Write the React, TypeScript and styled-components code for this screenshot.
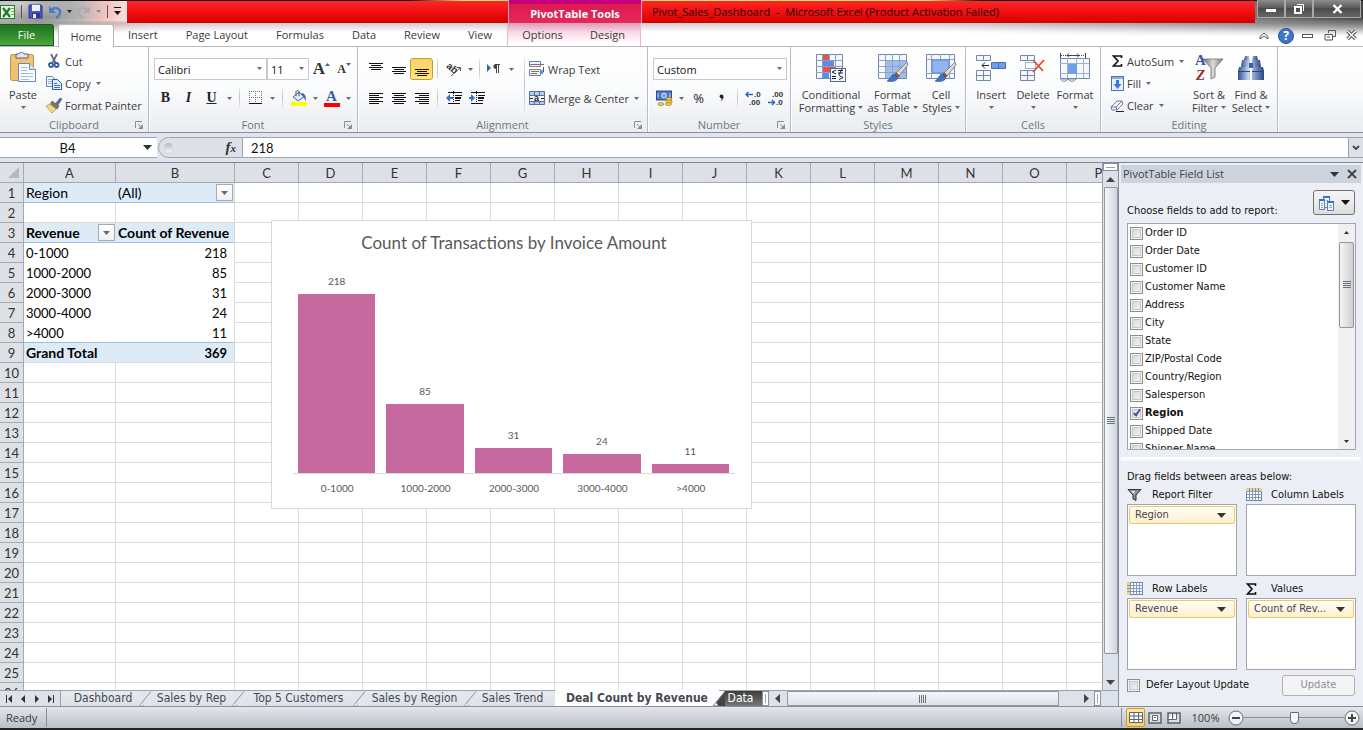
import React from "react";
import styled, { createGlobalStyle, css } from "styled-components";

const ui = `"Open Sans", "Liberation Sans", sans-serif`;
const dialog = `"DejaVu Sans Condensed", "DejaVu Sans", sans-serif`;
const sheet = `Lato, "Liberation Sans", sans-serif`;

const Global = createGlobalStyle`
  *, *::before, *::after { box-sizing: border-box; }
  html, body { margin: 0; height: 100%; }
  #root { height: 100%; }
  body { font: 11px/13px ${ui}; color: #3b3b3b; background: #fff; overflow: hidden; }
  button, input, select { font: inherit; color: inherit; margin: 0; }
  button { background: none; border: 0; padding: 0; cursor: default; }
`;

/* ---------- shared pieces ---------- */

const Svg = styled.svg`
  display: block;
  flex: none;
  overflow: visible;
`;

type IconProps = { w: number; h: number; children: React.ReactNode };
const Icon = ({ w, h, children }: IconProps) => (
  <Svg width={w} height={h} viewBox={`0 0 ${w} ${h}`} fill="none" aria-hidden="true">
    {children}
  </Svg>
);

type ArrowProps = { color?: string; big?: boolean; dir?: "up" | "down" | "left" | "right" };
const Arrow = ({ color = "#6a6a6a", big, dir = "down" }: ArrowProps) => {
  const size = big ? 9 : 5;
  const shapes = big
    ? { down: "M0 2h9L4.5 7z", up: "M0 7h9L4.5 2z", left: "M7 0v9L2 4.5z", right: "M2 0v9L7 4.5z" }
    : { down: "M0 1h5L2.5 4z", up: "M0 4h5L2.5 1z", left: "M4 0v5L1 2.5z", right: "M1 0v5L4 2.5z" };
  return (
    <Icon w={size} h={size}>
      <path d={shapes[dir]} fill={color} />
    </Icon>
  );
};

const Window = styled.div`
  display: flex;
  flex-direction: column;
  height: 100vh;
  overflow: hidden;
`;

/* ---------- title bar ---------- */

const Header = styled.header`
  flex: none;
  background:
    linear-gradient(to right, #111 0, #111 30%, #f3e36a 34%, #f3e36a 68%, #111 72%) top / 100% 1px no-repeat,
    linear-gradient(to bottom, transparent 20px, rgba(110, 110, 110, 0.35) 23px, rgba(255, 255, 255, 0.1) 32px, transparent 40px) no-repeat,
    radial-gradient(ellipse 60px 16px at 20px 4px, rgba(255, 255, 255, 0.5), transparent),
    linear-gradient(to bottom, transparent 18px, #fff 36px) no-repeat,
    linear-gradient(to right, #a9a9a9 0, #8a8a8a 40px, #b0b0b0 75px, #f3c2bf 105px, #fff 150px, #fff calc(100% - 420px), #d8d8d8 calc(100% - 330px), #777 calc(100% - 110px), #444 100%);
`;

const TitleRow = styled.div`
  display: flex;
  height: 23px;
`;

const QuickAccess = styled.div`
  display: flex;
  align-items: center;
  gap: 5px;
  width: 127px;
  flex: none;
`;

const QuickSep = styled.span`
  width: 1px;
  height: 13px;
  margin: 0 1px;
  background: #555;
`;

const redFill = css`
  background: linear-gradient(#ff2626, #f31414 40%, #d60000);
`;

const RedBlock = styled.div`
  ${redFill}
  width: 381px;
  margin-top: 1px;
  flex: none;
`;

const ToolsTitle = styled.div`
  width: 134px;
  flex: none;
  padding-top: 4px;
  text-align: center;
  font-weight: 700;
  line-height: 19px;
  color: #fff;
  background: linear-gradient(#c4007c 0, #c4007c 4px, #dd1a50 4px, #e5285a 100%);
  border: solid #f29ac0;
  border-width: 0 1px;
`;

const DocTitle = styled.h1`
  ${redFill}
  flex: 1;
  margin: 1px 0 0;
  padding-left: 10px;
  font: 400 11px/22px ${ui};
  color: #2a0000;
  white-space: pre;
`;

const WindowButtons = styled.div`
  display: flex;
  width: 108px;
  height: 19px;
  flex: none;
  padding: 0 2px 1px;
`;

const WindowButton = styled.button<{ $grow?: boolean }>`
  flex: ${(p) => (p.$grow ? "1" : "0 0 28px")};
  display: flex;
  align-items: center;
  justify-content: center;
  background: linear-gradient(#8d8d8d, #575757 50%, #4b4b4b 50%, #666);
  border: 1px solid #a8a8a8;
  border-top: 0;
`;

/* ---------- tabs ---------- */

const TabRow = styled.nav`
  display: flex;
  height: 24px;
  padding-top: 1px;
  box-shadow: inset 0 -1px #b6babf;
`;

const tabBase = css`
  height: 22px;
  font-size: 11px;
  line-height: 22px;
  text-align: center;
`;

const FileTab = styled.button`
  ${tabBase}
  width: 54px;
  line-height: 20px;
  color: #fff;
  background: linear-gradient(#217321, #2f8a2c 50%, #4ea63c);
  border: 1px solid #1c5d1e;
  border-left: 0;
  border-radius: 0 3px 0 0;
`;

const HomeTab = styled.button`
  ${tabBase}
  width: 56px;
  height: 23px;
  margin-left: 4px;
  line-height: 21px;
  background: #fff;
  border: 1px solid #b6babf;
  border-bottom: 0;
  border-radius: 3px 3px 0 0;
`;

const Tab = styled.button`
  ${tabBase}
  padding: 0 14px;
`;

const ToolTabs = styled.div`
  display: flex;
  width: 134px;
  margin: -1px auto 1px 1px;
  padding: 1px 0 0 2px;
  background: linear-gradient(rgba(238, 100, 160, 0.45), rgba(255, 255, 255, 0) 90%);
  border: solid #efb4d2;
  border-width: 0 1px;
`;

const ToolTab = styled.button`
  ${tabBase}
  flex: 1;
`;

const TabTools = styled.div`
  display: flex;
  align-items: center;
  width: 110px;
`;

const TabTool = styled.button`
  flex: 1;
  display: flex;
  justify-content: center;
`;

/* ---------- ribbon ---------- */

const Ribbon = styled.div`
  display: flex;
  flex: none;
  height: 86px;
  background: linear-gradient(#fff, #fafbfc 50%, #e9ecf0);
  border-bottom: 1px solid #8b9097;
`;

const Group = styled.section<{ $w: number }>`
  display: flex;
  flex-direction: column;
  width: ${(p) => p.$w}px;
  flex: none;
  border-right: 1px solid #b9bdc3;
  box-shadow: 1px 0 #fff;
`;

const GroupBody = styled.div<{ $pad?: string }>`
  display: flex;
  height: 70px;
  padding: ${(p) => p.$pad ?? "0"};
`;

const GroupLabel = styled.div`
  display: flex;
  align-items: center;
  height: 15px;
  color: #6f7680;

  span { flex: 1; text-align: center; }
`;

const Launcher = styled.button`
  width: 12px;
  height: 12px;
  margin: 0 3px 0 -15px;
`;

type RibbonGroupProps = { w: number; label: string; pad?: string; launcher?: boolean; children: React.ReactNode };
const RibbonGroup = ({ w, label, pad, launcher, children }: RibbonGroupProps) => (
  <Group $w={w} aria-label={label}>
    <GroupBody $pad={pad}>{children}</GroupBody>
    <GroupLabel>
      <span>{label}</span>
      {launcher && (
        <Launcher aria-label={`${label} options`}>
          <Icon w={12} h={12}>
            <path d="M2.5 9V2.5H9" stroke="#8a8f96" />
            <path d="M5 5l3 3" stroke="#8a8f96" />
            <path d="M10 5v5H5z" fill="#8a8f96" />
          </Icon>
        </Launcher>
      )}
    </GroupLabel>
  </Group>
);

const BigButton = styled.button<{ $w: number }>`
  display: flex;
  flex-direction: column;
  align-items: center;
  width: ${(p) => p.$w}px;
  flex: none;
  white-space: nowrap;
`;

const BigIcon = styled.span`
  display: flex;
  align-items: center;
  justify-content: center;
  height: 36px;
  margin: 3px 0 2px;
`;

const BigLine = styled.span`
  display: flex;
  align-items: center;
  gap: 3px;
  height: 13px;
`;

type LargeProps = { w: number; icon: React.ReactNode; top: string; bottom?: string };
const Large = ({ w, icon, top, bottom }: LargeProps) => (
  <BigButton $w={w}>
    <BigIcon>{icon}</BigIcon>
    <BigLine>{top}</BigLine>
    <BigLine>
      {bottom}
      <Arrow />
    </BigLine>
  </BigButton>
);

const Stack = styled.div<{ $gap?: number; $top?: number; $w?: number }>`
  display: flex;
  flex-direction: column;
  gap: ${(p) => p.$gap ?? 0}px;
  padding-top: ${(p) => p.$top ?? 0}px;
  width: ${(p) => (p.$w ? `${p.$w}px` : "auto")};
`;

const SmallButton = styled.button`
  display: flex;
  align-items: center;
  gap: 3px;
  height: 22px;
  white-space: nowrap;

  svg:last-child:not(:first-child) { margin-left: 2px; }
`;

const ToolLine = styled.div`
  display: flex;
  align-items: center;
  height: 22px;
`;

const Tool = styled.button<{ $w?: number; $on?: boolean }>`
  display: flex;
  align-items: center;
  justify-content: center;
  width: ${(p) => p.$w ?? 23}px;
  height: 22px;
  flex: none;
  border-radius: 3px;
  ${(p) =>
    p.$on &&
    css`
      background: linear-gradient(#fbd36b, #fddb6c 50%, #ffe88d);
      border: 1px solid #c29b3c;
    `}
`;

const Glyph = styled.span<{ $italic?: boolean; $line?: boolean }>`
  font: ${(p) => (p.$italic ? "italic" : "normal")} 700 14px/16px "Liberation Serif", serif;
  color: #222;
  text-decoration: ${(p) => (p.$line ? "underline" : "none")};
`;

const PercentGlyph = styled.span`
  font: 400 13px/16px ${ui};
  color: #222;
`;

const Divider = styled.span<{ $tall?: boolean }>`
  width: 1px;
  height: ${(p) => (p.$tall ? 54 : 20)}px;
  flex: none;
  margin: 0 4px;
  background: linear-gradient(#e6e8eb, #bfc3c8, #e6e8eb);
`;

const EditIcon = styled.span`
  display: flex;
  justify-content: center;
  width: 14px;
`;

const Picker = styled.label<{ $w: number }>`
  position: relative;
  display: block;
  width: ${(p) => p.$w}px;
  height: 22px;
  flex: none;

  svg { position: absolute; right: 5px; top: 8px; pointer-events: none; }
`;

const Select = styled.select`
  appearance: none;
  width: 100%;
  height: 22px;
  padding: 0 3px;
  color: #111;
  background: #fff;
  border: 1px solid #c6c9cd;
  border-radius: 0;
`;

type SelectBoxProps = { w: number; label: string; options: string[] };
const SelectBox = ({ w, label, options }: SelectBoxProps) => (
  <Picker $w={w}>
    <Select aria-label={label} defaultValue={options[0]}>
      {options.map((o) => (
        <option key={o}>{o}</option>
      ))}
    </Select>
    <Arrow />
  </Picker>
);

/* ---------- ribbon icons ---------- */

type Rows = [number, number, number][];
const lines = (rows: Rows) => rows.map(([x, y, w]) => `M${x} ${y + 0.5}h${w}`).join("");
const AlignIcon = ({ rows }: { rows: Rows }) => (
  <Icon w={14} h={13}>
    <path d={lines(rows)} stroke="#111" />
  </Icon>
);
const topRows: Rows = [[0, 0, 14], [2, 2, 10], [0, 4, 14], [2, 6, 10]];
const midRows: Rows = [[0, 4, 14], [2, 6, 10], [0, 8, 14], [2, 10, 10]];
const lowRows: Rows = [[0, 6, 14], [2, 8, 10], [0, 10, 14], [2, 12, 10]];
const leftRows: Rows = [[0, 1, 14], [0, 3, 10], [0, 5, 14], [0, 7, 10], [0, 9, 14], [0, 11, 10]];
const centerRows: Rows = [[0, 1, 14], [2, 3, 10], [0, 5, 14], [2, 7, 10], [0, 9, 14], [2, 11, 10]];
const rightRows: Rows = [[0, 1, 14], [4, 3, 10], [0, 5, 14], [4, 7, 10], [0, 9, 14], [4, 11, 10]];

const PasteIcon = () => (
  <Icon w={28} h={32}>
    <rect x="1.5" y="2.500" width="23" height="26" rx="2" fill="#efc173" stroke="#c58f3e" />
    <path d="M7 2h3c0-2 5-2 5 0h4v4H7z" fill="#e4e7eb" stroke="#5c636d" />
    <path d="M9.5 11.5h11l6 6v12h-17z" fill="#f7faff" stroke="#6f87b1" />
    <path d="M20.5 11.5v6h6" fill="#dbe6f7" stroke="#6f87b1" />
    <path d="M12 15.5h6M12 18.5h6M12 21.5h12M12 24.5h12M12 27.5h8" stroke="#a8bbdb" />
  </Icon>
);
const CutIcon = () => (
  <Icon w={16} h={16}>
    <path d="M5 1l4.500 9M11 1L6.500 10" stroke="#5b6a80" strokeWidth="1.700" />
    <circle cx="5" cy="12" r="2" stroke="#2f57a8" strokeWidth="1.800" />
    <circle cx="10.500" cy="12" r="2" stroke="#2f57a8" strokeWidth="1.800" />
  </Icon>
);
const CopyIcon = () => (
  <Icon w={16} h={16}>
    <path d="M.5 1.5h6l3 3v7h-9z" fill="#f3f7ff" stroke="#6484bd" />
    <path d="M2 4.5h4M2 6.5h5M2 8.5h5" stroke="#8ba8db" />
    <path d="M6.5 4.5h5l4 4v6h-9z" fill="#e3edff" stroke="#2e5ba8" />
    <path d="M8 8.5h3M8 10.5h6M8 12.5h6" stroke="#4674c4" />
  </Icon>
);
const BrushIcon = () => (
  <Icon w={16} h={16}>
    <path d="M10 6l4-5 2 1-4 6z" fill="#6e6e9d" stroke="#44446c" strokeWidth=".6" />
    <path d="M6 4l7 5-2 3-7-4z" fill="#777" stroke="#484848" strokeWidth=".6" />
    <path d="M4 7l6 5-4 4L0 9z" fill="#f5dc83" stroke="#b7973b" strokeWidth=".8" />
  </Icon>
);
const BorderIcon = () => (
  <Icon w={14} h={14}>
    <path d="M0 .5h13M0 6.5h13M.5 0v12M6.5 0v12M12.5 0v12" stroke="#777" strokeDasharray="1 1" />
    <path d="M0 12.5h13" stroke="#111" />
  </Icon>
);
const FillIcon = () => (
  <Icon w={16} h={17}>
    <path d="M2 7l6-5 5 5-6 4z" fill="#dce7f7" stroke="#4a6da7" />
    <path d="M5 6V1.5c0-1 3-1 3 0V6" stroke="#555" />
    <path d="M10 3c4 0 5 3 5 8l-2-3z" fill="#3c68b5" />
    <path d="M0 12h16v4H0z" fill="#ff0" />
  </Icon>
);
const LetterBar = styled.span`
  font: 700 15px/13px "Liberation Serif", serif;
  width: 16px;
  height: 17px;
  text-align: center;
  color: #3b5d9c;
  border-bottom: 4px solid #f00;
`;
const SizeLetter = styled.span<{ $small?: boolean }>`
  font: 700 ${(p) => (p.$small ? 12 : 17)}px/18px "Liberation Serif", serif;
  color: #333;
`;
const ScriptTri = ({ up }: { up?: boolean }) => (
  <Icon w={5} h={12}>
    <path d={up ? "M0 3h5L2.5 0z" : "M0 0h5L2.5 3z"} fill="#3a62ad" />
  </Icon>
);
const OrientIcon = () => (
  <Icon w={16} h={16}>
    <text x="0" y="9" fontSize="10" fontWeight="700" fontFamily="Liberation Sans" fill="#333" transform="rotate(40 4 7)">
      ab
    </text>
    <path d="M5 15l9-8M10.5 6.5h4V10" stroke="#555" />
  </Icon>
);
const ParaIcon = () => (
  <Icon w={14} h={12}>
    <path d="M0 1v8l4-4z" fill="#2f62c0" />
    <path d="M11.5 10V1.5M9.5 10V1.5M13 1.5H8" stroke="#444" />
    <path d="M9 1C5.500 1 5.500 6 9 6z" fill="#444" />
  </Icon>
);
const IndentIcon = ({ out }: { out?: boolean }) => (
  <Icon w={16} h={14}>
    <path d="M2 1.5h14M2 12.5h12" stroke="#111" />
    <path d="M9 4.5h7M9 9.5h5" stroke="#111" />
    <path d="M9 7h6" stroke="#111" strokeWidth="2" />
    <path d="M7.5 0v14" stroke="#111" strokeDasharray="1 1" />
    <path d={out ? "M4 3L0 7l4 4V8h3V6H4z" : "M2 3l4 4-4 4V8H0V6h2z"} fill="#3a6fd0" />
  </Icon>
);
const WrapIcon = () => (
  <Icon w={16} h={16}>
    <path d="M.5.5h11v5H.5zM.5 8.5h11v6H.5z" fill="#eef3fb" stroke="#6a82ab" />
    <path d="M0 3.5h15M2 10.5h8M2 12.5h6" stroke="#a5673f" />
    <path d="M14.5 6v5H12M14 8.5L11.500 11l2.500 2" stroke="#2c5bb0" />
  </Icon>
);
const MergeIcon = () => (
  <Icon w={16} h={15}>
    <path d="M.5.5h15v13H.5z" fill="#b8cbe8" stroke="#5571a3" />
    <path d="M0 4.5h16M0 10.5h16M5.5 0v4M10.5 0v4M5.5 11v3M10.5 11v3" stroke="#5571a3" />
    <path d="M1 5h14v5H1z" fill="#f5f8fd" />
    <text x="5" y="10" fontSize="9" fontWeight="700" fontFamily="Liberation Sans" fill="#222">
      a
    </text>
    <path d="M1 7.5h3M12 7.5h3" stroke="#222" />
  </Icon>
);
const MoneyIcon = () => (
  <Icon w={17} h={17}>
    <rect x=".5" y="1" width="15" height="9" fill="#4a74bd" stroke="#274c90" />
    <circle cx="8" cy="5.500" r="2.500" fill="#7fa2dd" stroke="#d4e1f8" />
    <path d="M2 3.5v4M14 3.5v4" stroke="#cfddf7" />
    <ellipse cx="13" cy="9" rx="3" ry="1.500" fill="#f6cc55" stroke="#a97918" strokeWidth=".7" />
    <ellipse cx="13" cy="11.500" rx="3" ry="1.500" fill="#f6cc55" stroke="#a97918" strokeWidth=".7" />
    <ellipse cx="12.500" cy="14" rx="3" ry="1.500" fill="#f6cc55" stroke="#a97918" strokeWidth=".7" />
    <ellipse cx="5" cy="14" rx="3" ry="1.500" fill="#f6cc55" stroke="#a97918" strokeWidth=".7" />
  </Icon>
);
const CommaIcon = () => (
  <Icon w={5} h={8}>
    <path d="M.5 2.500a2 2 0 114 0c0 2-1 3.500-3 4.500 1-1 1.200-2 1-2.700a2 2 0 01-2-1.800z" fill="#222" />
  </Icon>
);
const DecimalIcon = ({ more }: { more?: boolean }) => (
  <Icon w={17} h={16}>
    <g fontSize="8" fontWeight="700" fontFamily="Liberation Sans" fill="#333">
      <text x={more ? 9 : 4} y="7">{more ? ".0" : ".00"}</text>
      <text x={more ? 4 : 8} y="15">{more ? ".00" : ".0"}</text>
    </g>
    <path
      d={more ? "M8 4.5H1M3.5 2L1 4.5 3.5 7" : "M0 12.5h6M4 10l2.5 2.5L4 15"}
      stroke="#2c62c4"
      strokeWidth="1.400"
    />
  </Icon>
);
const CondIcon = () => (
  <Icon w={32} h={30}>
    <path d="M1.5 1.5h26v24h-26z" fill="#f4f8fe" stroke="#7388ac" />
    <path d="M8 2h6v5H8zM8 14h12v5H8z" fill="#ea5243" />
    <path d="M8 8h11v5H8zM8 20h6v5H8z" fill="#5b8be6" />
    <path d="M1 7.5h26M1 13.5h26M1 19.5h26M7.5 1v24M14.5 1v6M20.5 1v24" stroke="#8ba0c2" />
    <rect x="15.500" y="15.500" width="15" height="13" fill="#f4f6fa" stroke="#53698f" />
    <path d="M21 17l-4 2 4 2M17 23.5h4M17 25.5h4M23 17.5h5M23 20h5M27 16l-3 6M24 22.5l4 2-4 2" stroke="#222" />
  </Icon>
);
const PaintBrush = () => (
  <>
    <path d="M30 9l1 3-9 11-3-3z" fill="#d8d8d8" stroke="#777" strokeWidth=".8" />
    <path d="M19 19l4 4-3 2-3-3z" fill="#8b5a2b" />
    <path d="M17 21l4 4c-2 4-7 4-11 3 3-1 3-5 7-7z" fill="#3f73c4" stroke="#274f94" strokeWidth=".6" />
  </>
);
const TableIcon = () => (
  <Icon w={32} h={30}>
    <path d="M1.5 1.5h28v24h-28z" fill="#f4f8fe" stroke="#7388ac" />
    <path d="M9 8h20v17H9z" fill="#9dbef3" />
    <path d="M1 7.5h28M1 13.5h28M1 19.5h28M8.5 1v24M15.5 1v24M22.5 1v24" stroke="#8fa3c4" />
    <PaintBrush />
  </Icon>
);
const CellStyleIcon = () => (
  <Icon w={32} h={30}>
    <path d="M1.5 1.5h28v24h-28z" fill="#f4f8fe" stroke="#7388ac" />
    <path d="M1 6.5h28M1 20.5h28M6.5 1v24M24.5 1v24M15.5 1v5M15.5 21v4" stroke="#8fa3c4" />
    <path d="M7 7h17v13H7z" fill="#8fb5f3" stroke="#5d88cf" />
    <PaintBrush />
  </Icon>
);
const cellBlocks = "M1.5 2.5h14v5h-14zM8.5 2v6M1.5 17.5h14v10h-14zM8.5 17v10M1 22.5h14";
const InsertIcon = () => (
  <Icon w={32} h={30}>
    <path d={cellBlocks} fill="#f4f8fe" stroke="#7388ac" />
    <path d="M16.5 9.5h14v6h-14zM23.5 9v6" fill="#6f9eec" stroke="#4a70b3" />
    <path d="M14 12.5H7M10 9.5l-3 3 3 3" stroke="#222" />
  </Icon>
);
const DeleteIcon = () => (
  <Icon w={28} h={30}>
    <path d={cellBlocks} fill="#f4f8fe" stroke="#7388ac" />
    <path d="M6.5 9.5h10v6h-10z" stroke="#3d66ad" strokeDasharray="1 1" />
    <path d="M14 7l10 11M25 7L14 19" stroke="#e8482f" strokeWidth="1.800" />
  </Icon>
);
const FormatIcon = () => (
  <Icon w={32} h={31}>
    <path d="M2 2.5h24" stroke="#444" strokeDasharray="1 1" />
    <path d="M8 2.5h12M10 .5l-2 2 2 2M18 .5l2 2-2 2M1.5 0v5M26.5 0v5" stroke="#444" />
    <path d="M1.5 5.5h29v20h-29z" fill="#f4f8fe" stroke="#7388ac" />
    <path d="M1 10.5h29M1 20.5h29M8.5 5v20M17.5 5v20M24.5 5v20" stroke="#9fb1cd" />
    <path d="M9 11h9v10H9z" fill="#6f9eec" />
    <path d="M2 26c0 3 5 3 7 0 2 3 6 3 8 0z" fill="#fff" stroke="#7388ac" />
  </Icon>
);
const SigmaIcon = () => (
  <Icon w={11} h={12}>
    <path d="M9.5 3V1h-8L6 6l-4.500 5h8V9" stroke="#111" strokeWidth="1.600" />
  </Icon>
);
const FillDownIcon = () => (
  <Icon w={13} h={15}>
    <rect x=".5" y=".5" width="12" height="14" fill="#eaf1fc" stroke="#5272ab" />
    <path d="M1 1h11v2H1z" fill="#8caee0" />
    <path d="M5 4h3v4h2.500l-4 5-4-5H5z" fill="#3c76d8" />
  </Icon>
);
const EraserIcon = () => (
  <Icon w={14} h={13}>
    <path d="M7 2h5l1 3-6 6H2L1 8z" fill="#f2f5fa" stroke="#6b7c99" />
    <path d="M1 8h5l1 3M6 8l6-6" stroke="#6b7c99" />
    <path d="M6 12.5h8" stroke="#222" />
  </Icon>
);
const SortIcon = () => (
  <Icon w={30} h={30}>
    <defs>
      <linearGradient id="funnelSteel">
        <stop stopColor="#6b6b6b" />
        <stop offset=".5" stopColor="#dcdcdc" />
        <stop offset="1" stopColor="#777" />
      </linearGradient>
    </defs>
    <path d="M9 6h20l-8 9v9l-4 2V15z" fill="url(#funnelSteel)" stroke="#6e6e6e" strokeWidth=".8" />
    <text x="1" y="12" fontSize="15" fontWeight="700" fontFamily="Liberation Serif" fill="#3259a6">A</text>
    <text x="2" y="27" fontSize="15" fontWeight="700" fontStyle="italic" fontFamily="Liberation Serif" fill="#952b2b">Z</text>
  </Icon>
);
const FindIcon = () => (
  <Icon w={28} h={28}>
    <defs>
      <linearGradient id="barrel">
        <stop stopColor="#2f4f8d" />
        <stop offset=".4" stopColor="#c3d6f6" />
        <stop offset="1" stopColor="#2a4680" />
      </linearGradient>
    </defs>
    <path d="M8 2h4l1 4H7zM16 2h4l1 4h-6z" fill="url(#barrel)" />
    <path d="M5 6h8v7H4zM15 6h8l1 7h-9z" fill="url(#barrel)" />
    <path d="M12 9h4v5h-4z" fill="#3d5f9f" />
    <path d="M2 13h10l1 4v9H1v-9zM16 13h10l1 4v9H15v-9z" fill="url(#barrel)" />
    <path d="M1 17.5h12M15 17.5h12" stroke="#2a4680" />
  </Icon>
);

/* ---------- formula bar ---------- */

const FormulaBar = styled.div`
  display: flex;
  flex: none;
  height: 30px;
  padding: 4px 0;
  background: #dfe5ee;
  border-bottom: 1px solid #7f868f;
`;

const NameBox = styled.label`
  display: flex;
  align-items: center;
  width: 157px;
  padding-right: 5px;
  background: #fff;
  border: solid #9ba3ad;
  border-width: 1px 0;
`;

const NameInput = styled.input`
  flex: 1;
  min-width: 0;
  padding: 0 8px 0 0;
  border: 0;
  background: none;
  font: 13px/18px ${sheet};
  color: #111;
  text-align: center;
`;

const FxArea = styled.div`
  display: flex;
  align-items: center;
  justify-content: space-between;
  width: 85px;
  margin-left: 1px;
  padding: 0 6px 0 5px;
  background: #dde1e7;
  border: 1px solid #9ba3ad;
  border-radius: 11px 0 0 11px;
`;

const Knob = styled.span`
  width: 9px;
  height: 9px;
  border-radius: 50%;
  background: linear-gradient(#b4b8be, #f2f3f5);
`;

const FxButton = styled.button`
  font: italic 700 15px/18px "Liberation Serif", serif;
  color: #333;

  sub { font-size: 11px; vertical-align: baseline; }
`;

const FormulaInput = styled.input`
  flex: 1;
  min-width: 0;
  padding: 0 8px;
  border: solid #9ba3ad;
  border-width: 1px 0;
  background: #fff;
  font: 13px/18px ${sheet};
  color: #111;
`;

const ExpandButton = styled.button`
  display: flex;
  align-items: center;
  justify-content: center;
  width: 15px;
  background: #dde1e7;
  border: 1px solid #9ba3ad;
  border-right: 0;
`;

/* ---------- worksheet ---------- */

const Work = styled.main`
  display: flex;
  flex: 1;
  min-height: 0;
`;

const SheetSide = styled.div`
  display: flex;
  flex-direction: column;
  flex: 1;
  min-width: 0;
  background: #dde2ea;
`;

const GridRow = styled.div`
  display: flex;
  flex: 1;
  min-height: 0;
`;

const GridView = styled.div`
  position: relative;
  flex: 1;
  min-width: 0;
  overflow: hidden;
  background: #fff;
`;

const Grid = styled.table`
  table-layout: fixed;
  width: 1131px;
  border-collapse: separate;
  border-spacing: 0;
  font: 13px/18px ${sheet};
  color: #000;
`;

const HeadCell = styled.th`
  height: 20px;
  padding: 0;
  font-weight: 400;
  color: #333;
  background: #dde1e6;
  border: solid #a4abb5;
  border-width: 0 1px 1px 0;
`;

type CellLook = {
  $fill?: boolean;
  $bold?: boolean;
  $label?: boolean;
  $right?: boolean;
  $line?: "grid" | "blue" | "none";
  $open?: boolean;
};
const Cell = styled.td<CellLook>`
  height: 20px;
  padding: 0 ${(p) => (p.$right ? 7 : 2)}px 0 2px;
  white-space: nowrap;
  font-size: ${(p) => (p.$label ? 14 : 13)}px;
  text-align: ${(p) => (p.$right ? "right" : "left")};
  font-weight: ${(p) => (p.$bold ? 700 : 400)};
  background: ${(p) => (p.$fill ? "#ddebf7" : "#fff")};
  border-style: solid;
  border-width: 0 ${(p) => (p.$open ? 0 : 1)}px ${(p) => (p.$line === "none" ? 0 : 1)}px 0;
  border-color: ${(p) => (p.$line === "blue" ? "#dadcdd #dadcdd #9bc2e6" : "#dadcdd")};
`;

const CellLine = styled.span`
  display: flex;
  align-items: center;
  justify-content: space-between;
`;

const Drop = styled.button`
  display: flex;
  align-items: center;
  justify-content: center;
  width: 17px;
  height: 17px;
  margin-right: -1px;
  background: linear-gradient(#fff, #eef0f4);
  border: 1px solid #a5abb5;
`;
const DropButton = ({ label }: { label: string }) => (
  <Drop aria-label={label}>
    <Icon w={7} h={4}>
      <path d="M0 0h7L3.5 4z" fill="#6a6a6a" />
    </Icon>
  </Drop>
);

const CornerMark = styled.span`
  display: flex;
  justify-content: flex-end;
  padding-right: 4px;
`;

const ChartBox = styled.figure`
  position: absolute;
  left: 271px;
  top: 57px;
  width: 481px;
  height: 289px;
  margin: 0;
  padding: 12px 16px 0 21px;
  display: flex;
  flex-direction: column;
  background: #fff;
  border: 1px solid #d9d9d9;
  font: 10px/16px ${sheet};
  color: #595959;
  text-align: center;
`;

const ChartTitle = styled.figcaption`
  font-size: 17px;
  line-height: 20px;
`;

const Plot = styled.div`
  display: flex;
  align-items: flex-end;
  height: 221px;
  border-bottom: 1px solid #d9d9d9;
`;

const BarSlot = styled.div`
  flex: 1;
  padding: 0 6px 0 5px;
`;

const Bar = styled.div`
  margin-top: 5px;
  background: #c5699e;
`;

const AxisLabels = styled.div`
  display: flex;
  padding-top: 6px;

  span { flex: 1; }
`;

const VScroll = styled.div`
  display: flex;
  flex-direction: column;
  align-items: center;
  width: 16px;
  flex: none;
  background: #dde2ea;
  border-left: 1px solid #9aa1ab;
`;

const SplitBox = styled.span<{ $tall?: boolean }>`
  flex: none;
  width: ${(p) => (p.$tall ? 7 : 15)}px;
  height: ${(p) => (p.$tall ? 15 : 8)}px;
  background: linear-gradient(#9aa1ab, #9aa1ab) center / ${(p) => (p.$tall ? "1px 9px" : "9px 1px")} no-repeat #fff;
  border: 1px solid #8a919b;
`;

const ScrollArrow = styled.button`
  display: flex;
  align-items: center;
  justify-content: center;
  width: 16px;
  height: 16px;
  flex: none;
`;

const VThumb = styled.div`
  display: flex;
  align-items: center;
  justify-content: center;
  width: 14px;
  flex: 1;
  margin-bottom: 20px;
  background: linear-gradient(to right, #f6f8fa, #dfe4ea 60%, #d0d6de);
  border: 1px solid #8f97a2;
  border-radius: 1px;
`;

/* ---------- sheet tabs ---------- */

const TabsBar = styled.div`
  display: flex;
  height: 17px;
  flex: none;
  background: #dde2ea;
  border-top: 1px solid #9aa1ab;
  border-bottom: 1px solid #8a919b;
`;

const SheetNav = styled.div`
  display: flex;
  align-items: center;
  width: 61px;
  padding: 0 2px;
  border-right: 1px solid #9aa1ab;
`;

const NavButton = styled.button`
  flex: 1;
  display: flex;
  justify-content: center;
`;

const SheetTab = styled.button<{ $w: number; $kind?: "active" | "dark" }>`
  position: relative;
  width: ${(p) => p.$w}px;
  flex: none;
  height: 15px;
  font: ${(p) => (p.$kind === "active" ? 700 : 400)} 12px/15px ${dialog};
  white-space: nowrap;
  color: ${(p) => (p.$kind === "dark" ? "#fff" : "#454a52")};
  background: ${(p) =>
    p.$kind === "active" ? "#fff" : p.$kind === "dark" ? "linear-gradient(#3c3c3c, #777)" : "linear-gradient(#e6eaf0, #dce1e8)"};
  ${(p) => p.$kind === "active" && "margin-top: -1px; height: 16px; padding-top: 1px;"}
`;

const SlantBox = styled.span`
  width: 12px;
  margin: 0 -6px;
  flex: none;
  z-index: 1;
`;
const Slant = ({ left = "#e1e6ec", right = "#e1e6ec" }: { left?: string; right?: string }) => (
  <SlantBox>
    <Icon w={12} h={15}>
      <path d="M0 0h12L0 15z" fill={left} />
      <path d="M12 0v15H0z" fill={right} />
      <path d="M12 .5L.5 14.5" stroke="#8a919b" />
      <path d="M1 14.5h4l-2-3z" fill="#fff" stroke="#a5acb6" strokeWidth=".6" />
    </Icon>
  </SlantBox>
);

const HScroll = styled.div`
  display: flex;
  align-items: center;
  flex: 1;
  min-width: 0;
  padding-right: 17px;
`;

const HTrack = styled.div`
  display: flex;
  flex: 1;
  height: 15px;
`;

const HThumb = styled.div`
  display: flex;
  align-items: center;
  justify-content: center;
  width: 93%;
  margin-left: 2px;
  background: linear-gradient(#f4f6f9, #dde2e9);
  border: 1px solid #8f97a2;
  border-radius: 1px;
`;

/* ---------- field list ---------- */

const Panel = styled.aside`
  display: flex;
  flex-direction: column;
  width: 245px;
  flex: none;
  padding: 2px 2px 0;
  font: 11px/16px ${dialog};
  color: #111;
  background: #ebeff5;
  border-left: 1px solid #868e99;
  border-bottom: 1px solid #868e99;
`;

const PanelTitle = styled.h2`
  display: flex;
  align-items: center;
  gap: 8px;
  height: 18px;
  flex: none;
  margin: 0;
  padding: 0 4px 0 2px;
  font: 400 11px/18px ${ui};
  color: #3d4148;
  background: #ccd3dc;

  span { flex: 1; }
`;

const PanelBody = styled.div`
  display: flex;
  flex-direction: column;
  flex: 1;
  padding: 0 5px 0 6px;
`;

const ChooseRow = styled.div`
  display: flex;
  justify-content: space-between;
  align-items: flex-end;
  height: 36px;
  margin-bottom: 4px;
`;

const LayoutButton = styled.button`
  display: flex;
  align-items: center;
  justify-content: center;
  gap: 7px;
  width: 42px;
  height: 25px;
  margin: 0 1px 4px 0;
  background: linear-gradient(#f4f4f4, #ececec 50%, #dcdcdc);
  border: 1px solid #707070;
  border-radius: 3px;
`;

const ListBox = styled.div`
  display: flex;
  height: 227px;
  flex: none;
  background: #fff;
  border: 1px solid #a0a5ad;
`;

const FieldItems = styled.ul`
  flex: 1;
  margin: 0;
  padding: 0 2px;
  list-style: none;
  overflow: hidden;
`;

const Check = styled.label<{ $bold?: boolean; $gap?: number }>`
  display: flex;
  align-items: center;
  gap: ${(p) => p.$gap ?? 2}px;
  height: 18px;
  font-weight: ${(p) => (p.$bold ? 700 : 400)};
`;

const Box = styled.input`
  appearance: none;
  width: 13px;
  height: 13px;
  flex: none;
  background: linear-gradient(135deg, #cfd3d8, #f8f8f8);
  border: 1px solid #8e8f8f;
  box-shadow: inset 0 0 0 1px #f4f4f4, inset 0 0 0 2px #c4c8cd;

  &:checked::after {
    content: "";
    display: block;
    width: 4px;
    height: 8px;
    margin: 0 0 0 4px;
    border: solid #3f568f;
    border-width: 0 2px 2px 0;
    rotate: 35deg;
  }
`;

const ListScroll = styled.div`
  display: flex;
  flex-direction: column;
  align-items: center;
  width: 17px;
  background: #f0f0f0;
`;

const ListThumb = styled.div`
  display: flex;
  align-items: center;
  justify-content: center;
  width: 15px;
  height: 86px;
  margin: 2px 0 auto;
  background: linear-gradient(to right, #f5f5f5, #e2e2e2 50%, #cfcfcf);
  border: 1px solid #959595;
  border-radius: 2px;
`;

const Rule = styled.hr`
  height: 4px;
  margin: 7px -5px 8px -6px;
  border: 0;
  flex: none;
  background: linear-gradient(#fff, #f5f6f8);
`;

const Areas = styled.div`
  display: grid;
  grid-template-columns: 1fr 1fr;
  column-gap: 9px;
`;

const AreaTitle = styled.h3`
  display: flex;
  align-items: center;
  gap: 9px;
  height: 19px;
  margin: 0;
  font: 400 11px/16px ${dialog};
`;

const AreaIcon = styled.span`
  width: 16px;
`;

const DropArea = styled.div`
  height: 72px;
  margin-bottom: 3px;
  padding: 1px;
  background: #fff;
  border: 1px solid #a0a5ad;
`;

const Chip = styled.button`
  display: flex;
  align-items: center;
  justify-content: space-between;
  width: 100%;
  height: 18px;
  padding: 0 8px 0 5px;
  color: #444;
  background: linear-gradient(#fffdf7, #fdf0cf);
  border: 1px solid #efcb5a;
  border-radius: 2px;
`;

const Footer = styled.div`
  display: flex;
  align-items: center;
  justify-content: space-between;
  height: 24px;
  padding-right: 1px;
`;

const UpdateButton = styled.button`
  width: 73px;
  height: 21px;
  color: #8d9299;
  background: #f4f4f4;
  border: 1px solid #adb2b5;
  border-radius: 3px;
`;

/* ---------- status bar ---------- */

const Status = styled.footer`
  display: flex;
  align-items: center;
  height: 23px;
  flex: none;
  padding: 0 3px 0 6px;
  background: linear-gradient(#e3e6ea, #b9bfc7);
  border-bottom: 2px solid #222;
`;

const StatusSep = styled.span`
  width: 1px;
  height: 19px;
  margin: 0 4px 0 9px;
  background: #8a8f97;
`;

const Spacer = styled.span`
  flex: 1;
`;

const ViewButton = styled.button<{ $on?: boolean }>`
  display: flex;
  align-items: center;
  justify-content: center;
  width: 19px;
  height: 19px;
  border-radius: 2px;
  border: 1px solid ${(p) => (p.$on ? "#c29b3c" : "transparent")};
  background: ${(p) => (p.$on ? "linear-gradient(#fde9a0, #fbd15d)" : "none")};
`;

const Zoom = styled.span`
  width: 45px;
  text-align: center;
`;

const Round = styled.button`
  flex: none;
`;

const Slider = styled.input`
  appearance: none;
  width: 100px;
  height: 14px;
  background: linear-gradient(#8a8f99, #8a8f99) center / 100% 1px no-repeat;

  &::-webkit-slider-thumb {
    appearance: none;
    width: 9px;
    height: 12px;
    background: #f5f6f8;
    border: 1px solid #666c75;
    border-radius: 1px 1px 4px 4px;
  }
`;

/* ---------- data ---------- */

const columns = "ABCDEFGHIJKLMNOP".split("");
const rowNumbers = Array.from({ length: 26 }, (_, i) => i + 1);
const revenue = [
  { label: "0-1000", count: 218 },
  { label: "1000-2000", count: 85 },
  { label: "2000-3000", count: 31 },
  { label: "3000-4000", count: 24 },
  { label: ">4000", count: 11 },
];
const fields = [
  "Order ID", "Order Date", "Customer ID", "Customer Name", "Address", "City", "State",
  "ZIP/Postal Code", "Country/Region", "Salesperson", "Region", "Shipped Date", "Shipper Name",
];

const PivotCells = ({ row }: { row: number }) => {
  if (row === 1)
    return (
      <>
        <Cell $fill $open $label $line="blue">Region</Cell>
        <Cell $fill $label $line="blue">
          <CellLine>(All)<DropButton label="Filter region" /></CellLine>
        </Cell>
      </>
    );
  if (row === 3)
    return (
      <>
        <Cell $fill $open $bold $label $line="blue">
          <CellLine>Revenue<DropButton label="Filter revenue" /></CellLine>
        </Cell>
        <Cell $fill $bold $label $line="blue">Count of Revenue</Cell>
      </>
    );
  if (row >= 4 && row <= 8) {
    const item = revenue[row - 4];
    const line = row === 8 ? "blue" : "none";
    return (
      <>
        <Cell $open $line={line}>{item.label}</Cell>
        <Cell $right $line={line}>{item.count}</Cell>
      </>
    );
  }
  if (row === 9)
    return (
      <>
        <Cell $fill $open $bold $label>Grand Total</Cell>
        <Cell $fill $bold $right>369</Cell>
      </>
    );
  return (
    <>
      <Cell />
      <Cell />
    </>
  );
};

const Chart = () => (
  <ChartBox>
    <ChartTitle>Count of Transactions by Invoice Amount</ChartTitle>
    <Plot>
      {revenue.map((r) => (
        <BarSlot key={r.label}>
          {r.count}
          <Bar style={{ height: Math.floor(r.count * 0.822) }} />
        </BarSlot>
      ))}
    </Plot>
    <AxisLabels>
      {revenue.map((r) => (
        <span key={r.label}>{r.label}</span>
      ))}
    </AxisLabels>
  </ChartBox>
);

const GripH = () => (
  <Icon w={8} h={8}>
    <path d="M0 .5h8M0 2.5h8M0 4.5h8M0 6.5h8" stroke="#6c737d" />
  </Icon>
);
const GridGlyph = ({ band }: { band: "top" | "left" }) => (
  <Icon w={16} h={13}>
    <rect x=".5" y=".5" width="15" height="12" fill="#fff" stroke="#6782b0" />
    <path d={band === "top" ? "M0 0h16v4H0z" : "M0 0h4v13H0z"} fill="#f0d27c" />
    <path d="M0 3.5h16M0 6.5h16M0 9.5h16M3.5 0v13M6.5 0v13M9.5 0v13M12.5 0v13" stroke="#7f97bf" />
  </Icon>
);
const SmallFunnel = () => (
  <Icon w={16} h={12}>
    <path d="M1 .5h13L9 6v5.500L6 10V6z" fill="#8e8e8e" stroke="#333" />
    <path d="M4 2h4L7 5z" fill="#eee" />
  </Icon>
);

export default function App() {
  return (
    <Window>
      <Global />
      <Header>
        <TitleRow>
          <QuickAccess>
            <Icon w={15} h={16}>
              <rect x=".5" y="1.500" width="14" height="13" fill="#e9f5e6" stroke="#2a7a2c" />
              <path d="M3 4l7 9M10 4l-7 9" stroke="#1f7a26" strokeWidth="2.200" />
              <path d="M11 4.5h3M11 7.5h3M11 10.5h3" stroke="#6cb063" />
            </Icon>
            <QuickSep />
            <Icon w={15} h={15}>
              <path d="M1 1h12l1 1v12H1z" fill="#4a52c4" stroke="#2f3591" />
              <path d="M4 1h8v6H4z" fill="#f1f3fb" />
              <path d="M4 9h8v5H4z" fill="#2f3591" />
              <path d="M5 10h3v4H5z" fill="#e8ebfa" />
            </Icon>
            <Icon w={14} h={14}>
              <path d="M3 5c5-4 10-1 9 3-.5 2-2 4-4 5" stroke="#4a79cf" strokeWidth="2.400" />
              <path d="M1 1v7h7z" fill="#4a79cf" />
            </Icon>
            <Arrow color="#222" />
            <Icon w={14} h={14}>
              <path d="M11 5C6 1 1 4 2 8c.5 2 2 4 4 5" stroke="#aab" strokeWidth="2" />
              <path d="M13 1v7H6z" fill="#aab" />
            </Icon>
            <Arrow color="#888" />
            <QuickSep />
            <Icon w={7} h={9}>
              <path d="M0 .5h7" stroke="#111" />
              <path d="M0 4h7L3.5 8z" fill="#111" />
            </Icon>
          </QuickAccess>
          <RedBlock />
          <ToolsTitle>PivotTable Tools</ToolsTitle>
          <DocTitle>{"Pivot_Sales_Dashboard  -  Microsoft Excel (Product Activation Failed)"}</DocTitle>
          <WindowButtons>
            <WindowButton aria-label="Minimize">
              <Icon w={12} h={10}><path d="M1 5h10v3H1z" fill="#fff" /></Icon>
            </WindowButton>
            <WindowButton aria-label="Restore">
              <Icon w={12} h={12}>
                <path d="M4 1.5h6.5V8" stroke="#fff" />
                <path d="M2 4h6v6H2z" stroke="#fff" strokeWidth="2" />
              </Icon>
            </WindowButton>
            <WindowButton $grow aria-label="Close">
              <Icon w={11} h={10}><path d="M1.5 1l8 8M9.5 1l-8 8" stroke="#fff" strokeWidth="2.400" /></Icon>
            </WindowButton>
          </WindowButtons>
        </TitleRow>
        <TabRow>
          <FileTab>File</FileTab>
          <HomeTab>Home</HomeTab>
          {["Insert", "Page Layout", "Formulas", "Data", "Review", "View"].map((t) => (
            <Tab key={t}>{t}</Tab>
          ))}
          <ToolTabs>
            <ToolTab>Options</ToolTab>
            <ToolTab>Design</ToolTab>
          </ToolTabs>
          <TabTools>
            <TabTool aria-label="Minimize ribbon">
              <Icon w={10} h={8}><path d="M1 4.500L5 1l4 3.500V7L5 4 1 7z" fill="#fff" stroke="#555" /></Icon>
            </TabTool>
            <TabTool aria-label="Help">
              <Icon w={16} h={16}>
                <circle cx="8" cy="8" r="7.500" fill="#3f76c8" stroke="#2b559b" />
                <text x="8" y="12" textAnchor="middle" fontSize="12" fontWeight="700" fontFamily="Open Sans" fill="#fff">?</text>
              </Icon>
            </TabTool>
            <TabTool aria-label="Minimize window">
              <Icon w={12} h={6}><rect x=".5" y="1.500" width="10" height="3" fill="#fff" stroke="#555" /></Icon>
            </TabTool>
            <TabTool aria-label="Restore window">
              <Icon w={13} h={11}><path d="M4.5 3V.5h7v6H9M1 4.5h7.500v5.500H1zM3 7h3" stroke="#555" /></Icon>
            </TabTool>
            <TabTool aria-label="Close window">
              <Icon w={12} h={11}>
                <path d="M1.5 1l8 8M9.5 1l-8 8" stroke="#555" strokeWidth="3.600" />
                <path d="M1.5 1l8 8M9.5 1l-8 8" stroke="#fff" strokeWidth="1.400" />
              </Icon>
            </TabTool>
          </TabTools>
        </TabRow>
      </Header>

      <Ribbon>
        <RibbonGroup w={149} label="Clipboard" launcher>
          <Large w={46} icon={<PasteIcon />} top="Paste" />
          <Stack $top={3}>
            <SmallButton><CutIcon />Cut</SmallButton>
            <SmallButton><CopyIcon />Copy<Arrow /></SmallButton>
            <SmallButton><BrushIcon />Format Painter</SmallButton>
          </Stack>
        </RibbonGroup>

        <RibbonGroup w={209} label="Font" launcher pad="11px 0 0 5px">
          <Stack $gap={7}>
            <ToolLine>
              <SelectBox w={113} label="Font" options={["Calibri", "Arial"]} />
              <SelectBox w={42} label="Font size" options={["11", "12"]} />
              <Tool $w={25} aria-label="Grow font"><SizeLetter>A</SizeLetter><ScriptTri up /></Tool>
              <Tool $w={20} aria-label="Shrink font"><SizeLetter $small>A</SizeLetter><ScriptTri /></Tool>
            </ToolLine>
            <ToolLine>
              <Tool aria-label="Bold"><Glyph>B</Glyph></Tool>
              <Tool aria-label="Italic"><Glyph $italic>I</Glyph></Tool>
              <Tool aria-label="Underline"><Glyph $line>U</Glyph></Tool>
              <Tool $w={12} aria-label="Underline styles"><Arrow /></Tool>
              <Divider />
              <Tool aria-label="Borders"><BorderIcon /></Tool>
              <Tool $w={11} aria-label="Border styles"><Arrow /></Tool>
              <Divider />
              <Tool aria-label="Fill color"><FillIcon /></Tool>
              <Tool $w={10} aria-label="Fill colors"><Arrow /></Tool>
              <Tool aria-label="Font color"><LetterBar>A</LetterBar></Tool>
              <Tool $w={10} aria-label="Font colors"><Arrow /></Tool>
            </ToolLine>
          </Stack>
        </RibbonGroup>

        <RibbonGroup w={290} label="Alignment" launcher pad="11px 0 0 6px">
          <Stack $gap={7}>
            <ToolLine>
              <Tool aria-label="Top align"><AlignIcon rows={topRows} /></Tool>
              <Tool aria-label="Middle align"><AlignIcon rows={midRows} /></Tool>
              <Tool $on aria-label="Bottom align"><AlignIcon rows={lowRows} /></Tool>
              <Divider />
              <Tool aria-label="Orientation"><OrientIcon /></Tool>
              <Tool $w={10} aria-label="Orientation options"><Arrow /></Tool>
              <Divider />
              <Tool $w={19} aria-label="Text direction"><ParaIcon /></Tool>
              <Tool $w={17} aria-label="Text direction options"><Arrow /></Tool>
            </ToolLine>
            <ToolLine>
              <Tool aria-label="Align left"><AlignIcon rows={leftRows} /></Tool>
              <Tool aria-label="Center"><AlignIcon rows={centerRows} /></Tool>
              <Tool aria-label="Align right"><AlignIcon rows={rightRows} /></Tool>
              <Divider />
              <Tool aria-label="Decrease indent"><IndentIcon out /></Tool>
              <Tool aria-label="Increase indent"><IndentIcon /></Tool>
            </ToolLine>
          </Stack>
          <Divider $tall />
          <Stack $gap={7}>
            <SmallButton><WrapIcon />Wrap Text</SmallButton>
            <SmallButton><MergeIcon />Merge &amp; Center<Arrow /></SmallButton>
          </Stack>
        </RibbonGroup>

        <RibbonGroup w={143} label="Number" launcher pad="11px 0 0 5px">
          <Stack $gap={7}>
            <SelectBox w={134} label="Number format" options={["Custom", "General"]} />
            <ToolLine>
              <Tool aria-label="Accounting format"><MoneyIcon /></Tool>
              <Tool $w={11} aria-label="Currencies"><Arrow /></Tool>
              <Tool aria-label="Percent"><PercentGlyph>%</PercentGlyph></Tool>
              <Tool aria-label="Comma style"><CommaIcon /></Tool>
              <Divider />
              <Tool aria-label="Increase decimal"><DecimalIcon more /></Tool>
              <Tool aria-label="Decrease decimal"><DecimalIcon /></Tool>
            </ToolLine>
          </Stack>
        </RibbonGroup>

        <RibbonGroup w={175} label="Styles" pad="0 0 0 5px">
          <Large w={70} icon={<CondIcon />} top="Conditional" bottom="Formatting" />
          <Large w={53} icon={<TableIcon />} top="Format" bottom="as Table" />
          <Large w={44} icon={<CellStyleIcon />} top="Cell" bottom="Styles" />
        </RibbonGroup>

        <RibbonGroup w={135} label="Cells" pad="0 0 0 4px">
          <Large w={42} icon={<InsertIcon />} top="Insert" />
          <Large w={42} icon={<DeleteIcon />} top="Delete" />
          <Large w={42} icon={<FormatIcon />} top="Format" />
        </RibbonGroup>

        <RibbonGroup w={177} label="Editing" pad="0 0 0 9px">
          <Stack $top={3} $w={78}>
            <SmallButton><EditIcon><SigmaIcon /></EditIcon>AutoSum<Arrow /></SmallButton>
            <SmallButton><EditIcon><FillDownIcon /></EditIcon>Fill<Arrow /></SmallButton>
            <SmallButton><EditIcon><EraserIcon /></EditIcon>Clear<Arrow /></SmallButton>
          </Stack>
          <Large w={42} icon={<SortIcon />} top="Sort &amp;" bottom="Filter" />
          <Large w={42} icon={<FindIcon />} top="Find &amp;" bottom="Select" />
        </RibbonGroup>
      </Ribbon>

      <FormulaBar>
        <NameBox>
          <NameInput aria-label="Name box" defaultValue="B4" />
          <Arrow big color="#333" />
        </NameBox>
        <FxArea>
          <Knob />
          <FxButton aria-label="Insert function">f<sub>x</sub></FxButton>
        </FxArea>
        <FormulaInput aria-label="Formula" defaultValue="218" />
        <ExpandButton aria-label="Expand formula bar">
          <Icon w={8} h={6}><path d="M1 1l3 3 3-3" stroke="#444" strokeWidth="1.800" /></Icon>
        </ExpandButton>
      </FormulaBar>

      <Work>
        <SheetSide>
          <GridRow>
            <GridView>
              <Grid>
                <colgroup>
                  <col width={24} />
                  <col width={92} />
                  <col width={119} />
                  {columns.slice(2).map((c) => (
                    <col key={c} width={64} />
                  ))}
                </colgroup>
                <thead>
                  <tr>
                    <HeadCell aria-label="Select all">
                      <CornerMark>
                        <Icon w={11} h={11}><path d="M11 0v11H0z" fill="#b5bac2" /></Icon>
                      </CornerMark>
                    </HeadCell>
                    {columns.map((c) => (
                      <HeadCell key={c} scope="col">{c}</HeadCell>
                    ))}
                  </tr>
                </thead>
                <tbody>
                  {rowNumbers.map((n) => (
                    <tr key={n}>
                      <HeadCell scope="row">{n}</HeadCell>
                      <PivotCells row={n} />
                      {columns.slice(2).map((c) => (
                        <Cell key={c} />
                      ))}
                    </tr>
                  ))}
                </tbody>
              </Grid>
              <Chart />
            </GridView>
            <VScroll>
              <SplitBox />
              <ScrollArrow aria-label="Scroll up"><Arrow big dir="up" color="#444" /></ScrollArrow>
              <VThumb><GripH /></VThumb>
              <ScrollArrow aria-label="Scroll down"><Arrow big color="#444" /></ScrollArrow>
            </VScroll>
          </GridRow>
          <TabsBar>
            <SheetNav>
              <NavButton aria-label="First sheet"><Icon w={8} h={8}><path d="M1 0h1v8H1zM7 0v8L3 4z" fill="#333" /></Icon></NavButton>
              <NavButton aria-label="Previous sheet"><Icon w={8} h={8}><path d="M6 0v8L2 4z" fill="#333" /></Icon></NavButton>
              <NavButton aria-label="Next sheet"><Icon w={8} h={8}><path d="M2 0v8l4-4z" fill="#333" /></Icon></NavButton>
              <NavButton aria-label="Last sheet"><Icon w={8} h={8}><path d="M1 0v8l4-4zM6 0h1v8H6z" fill="#333" /></Icon></NavButton>
            </SheetNav>
            <SheetTab $w={84}>Dashboard</SheetTab>
            <Slant />
            <SheetTab $w={93}>Sales by Rep</SheetTab>
            <Slant />
            <SheetTab $w={121}>Top 5 Customers</SheetTab>
            <Slant />
            <SheetTab $w={111}>Sales by Region</SheetTab>
            <Slant />
            <SheetTab $w={85}>Sales Trend</SheetTab>
            <SheetTab $w={164} $kind="active">Deal Count by Revenue</SheetTab>
            <Slant left="#fff" right="#444" />
            <SheetTab $w={43} $kind="dark">Data</SheetTab>
            <HScroll>
              <SplitBox $tall />
              <ScrollArrow aria-label="Scroll left"><Arrow big dir="left" color="#444" /></ScrollArrow>
              <HTrack>
                <HThumb>
                  <Icon w={8} h={8}><path d="M.5 0v8M2.5 0v8M4.5 0v8M6.5 0v8" stroke="#6c737d" /></Icon>
                </HThumb>
              </HTrack>
              <ScrollArrow aria-label="Scroll right"><Arrow big dir="right" color="#444" /></ScrollArrow>
              <SplitBox $tall />
            </HScroll>
          </TabsBar>
        </SheetSide>

        <Panel>
          <PanelTitle>
            <span>PivotTable Field List</span>
            <Arrow big color="#333" />
            <Icon w={10} h={10}><path d="M1 1l8 8M9 1L1 9" stroke="#444" strokeWidth="2" /></Icon>
          </PanelTitle>
          <PanelBody>
            <ChooseRow>
              Choose fields to add to report:
              <LayoutButton aria-label="Field list layout">
                <Icon w={16} h={16}>
                  <path d="M5.5 1.5h6v11h-6z" fill="#f0f5fe" stroke="#5f7fb8" />
                  <path d="M5 1h7v2H5z" fill="#3d6fc7" />
                  <path d="M1.5 4.5h5v10h-5zM9.5 6.5h6v9h-6z" fill="#f0f5fe" stroke="#5f7fb8" />
                  <path d="M1 4h6v2H1zM9 6h7v2H9z" fill="#3d6fc7" />
                  <path d="M3 8.5h2M3 10.5h2M3 12.5h2M11 10.5h3M11 12.5h3M8 5.5h2" stroke="#8aa5d6" />
                </Icon>
                <Arrow big color="#111" />
              </LayoutButton>
            </ChooseRow>
            <ListBox>
              <FieldItems>
                {fields.map((f) => (
                  <li key={f}>
                    <Check $bold={f === "Region"}>
                      <Box type="checkbox" defaultChecked={f === "Region"} />
                      {f}
                    </Check>
                  </li>
                ))}
              </FieldItems>
              <ListScroll>
                <ScrollArrow aria-label="Scroll fields up"><Arrow dir="up" color="#333" /></ScrollArrow>
                <ListThumb><GripH /></ListThumb>
                <ScrollArrow aria-label="Scroll fields down"><Arrow color="#333" /></ScrollArrow>
              </ListScroll>
            </ListBox>
            <Rule />
            Drag fields between areas below:
            <Areas>
              <section>
                <AreaTitle><AreaIcon><SmallFunnel /></AreaIcon>Report Filter</AreaTitle>
                <DropArea><Chip>Region<Arrow big color="#333" /></Chip></DropArea>
              </section>
              <section>
                <AreaTitle><AreaIcon><GridGlyph band="top" /></AreaIcon>Column Labels</AreaTitle>
                <DropArea />
              </section>
              <section>
                <AreaTitle><AreaIcon><GridGlyph band="left" /></AreaIcon>Row Labels</AreaTitle>
                <DropArea><Chip>Revenue<Arrow big color="#333" /></Chip></DropArea>
              </section>
              <section>
                <AreaTitle><AreaIcon><SigmaIcon /></AreaIcon>Values</AreaTitle>
                <DropArea><Chip>Count of Rev...<Arrow big color="#333" /></Chip></DropArea>
              </section>
            </Areas>
            <Footer>
              <Check $gap={6}><Box type="checkbox" />Defer Layout Update</Check>
              <UpdateButton disabled>Update</UpdateButton>
            </Footer>
          </PanelBody>
        </Panel>
      </Work>

      <Status>
        Ready
        <StatusSep />
        <Spacer />
        <StatusSep />
        <ViewButton $on aria-label="Normal view">
          <Icon w={14} h={12}><path d="M.5.5h13v10H.5zM0 4h14M0 7.500h14M5 0v11M9.5 0v11" fill="#fff" stroke="#5b6470" /></Icon>
        </ViewButton>
        <ViewButton aria-label="Page layout view">
          <Icon w={14} h={12}>
            <path d="M1 1h12v10H1z" fill="#ddd" stroke="#5b6470" strokeWidth="1.500" />
            <path d="M4.5 3.5h5v5h-5zM6 5.5h2" fill="#fff" stroke="#5b6470" />
          </Icon>
        </ViewButton>
        <ViewButton aria-label="Page break view">
          <Icon w={14} h={12}>
            <path d="M1 1h12v10H1z" fill="#ddd" stroke="#5b6470" strokeWidth="1.500" />
            <path d="M5.5 1v6.500H1M9.5 1v6.500h-4" fill="#fff" stroke="#5b6470" />
          </Icon>
        </ViewButton>
        <Zoom>100%</Zoom>
        <Round aria-label="Zoom out">
          <Icon w={16} h={16}><circle cx="8" cy="8" r="7" fill="#f2f3f5" stroke="#666c75" /><path d="M4 8h8" stroke="#444" strokeWidth="2" /></Icon>
        </Round>
        <Slider type="range" aria-label="Zoom" defaultValue={50} />
        <Round aria-label="Zoom in">
          <Icon w={16} h={16}><circle cx="8" cy="8" r="7" fill="#f2f3f5" stroke="#666c75" /><path d="M4 8h8M8 4v8" stroke="#444" strokeWidth="2" /></Icon>
        </Round>
      </Status>
    </Window>
  );
}
